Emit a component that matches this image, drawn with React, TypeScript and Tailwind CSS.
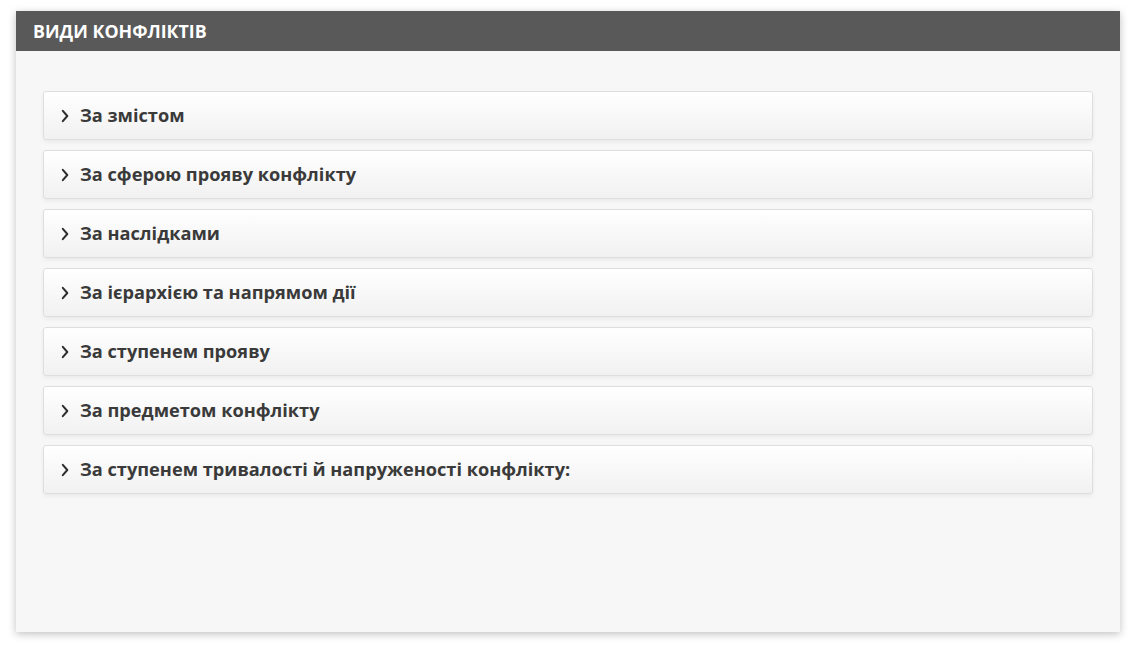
import React from "react";

const items = [
  "За змістом",
  "За сферою прояву конфлікту",
  "За наслідками",
  "За ієрархією та напрямом дії",
  "За ступенем прояву",
  "За предметом конфлікту",
  "За ступенем тривалості й напруженості конфлікту:",
];

function Chevron() {
  return (
    <svg width="8" height="14" viewBox="0 0 8 14" fill="none" className="shrink-0">
      <path d="M1.8 1.8 L6.3 7 L1.8 12.2" stroke="#2e2e2e" strokeWidth="2" strokeLinecap="round" strokeLinejoin="round" />
    </svg>
  );
}

export default function App() {
  return (
    <div
      className="w-[1136px] h-[653px] bg-white pt-[11px] pl-[16px]"
      style={{ fontFamily: '"Open Sans", "Noto Sans", sans-serif' }}
    >
      <div className="w-[1104px] h-[621px] bg-[#f7f7f7] shadow-[0_2px_8px_rgba(0,0,0,0.25)] flex flex-col">
        <div className="h-[40px] bg-[#595959] flex items-center px-[17px]">
          <span className="text-white font-bold text-[17.8px] uppercase">Види конфліктів</span>
        </div>
        <div className="flex flex-col gap-[10px] pt-[40px] px-[27px]">
          {items.map((label, i) => (
            <div
              key={i}
              className="h-[49px] rounded-[3px] border border-[#dedede] bg-gradient-to-b from-white to-[#f1f1f1] shadow-[0_2px_4px_rgba(0,0,0,0.06)] flex items-center gap-[11px] pl-[17px]"
            >
              <Chevron />
              <span className="text-[#3a3a3a] font-bold text-[18.2px]">{label}</span>
            </div>
          ))}
        </div>
      </div>
    </div>
  );
}
